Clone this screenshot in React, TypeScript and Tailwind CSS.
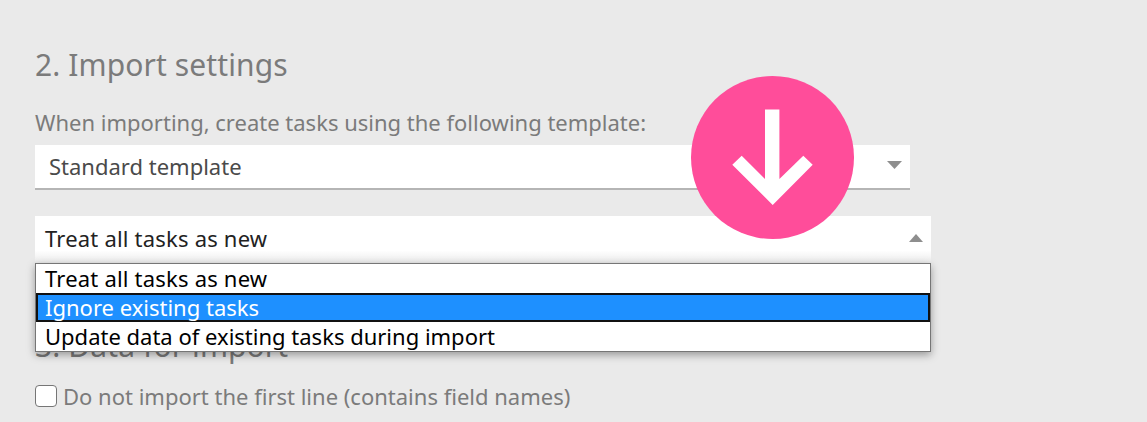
export default function App() {
  return (
    <div className="relative h-[422px] w-[1147px] overflow-hidden bg-[#eaeaea] pl-[35px] pt-[47px] font-['Noto_Sans',sans-serif]">
      <h2 className="h-[36px] text-[30px] leading-[36px] tracking-[0.1px] text-[#7b7b7b]">2. Import settings</h2>
      <p className="mt-[23px] h-[32px] text-[22px] leading-[32px] text-[#7b7b7b]">When importing, create tasks using the following template:</p>
      <div className="mt-[7px] flex h-[45px] w-[875px] items-center justify-between border-b-2 border-[#b5b5b5] bg-white pl-[14px] pr-[8px]">
        <span className="text-[22px] text-[#4a4a4a]">Standard template</span>
        <svg width="15" height="8" viewBox="0 0 15 8" className="mb-[4px]"><path d="M0 0h15L7.500 8z" fill="#8e8e8e" /></svg>
      </div>
      <div className="mt-[26px] flex h-[46px] w-[896px] items-center justify-between bg-gradient-to-b from-white from-[75%] to-[#ececec] pl-[10px] pr-[8px]">
        <span className="mb-[2px] text-[22px] tracking-[0.2px] text-[#222222]">Treat all tasks as new</span>
        <svg width="14" height="8" viewBox="0 0 14 8" className="mb-[2px]"><path d="M0 8h14L7 0z" fill="#8e8e8e" /></svg>
      </div>
      <h2 className="mt-[66px] h-[36px] text-[30px] leading-[36px] tracking-[0.1px] text-[#7b7b7b]">3. Data for import</h2>
      <label className="mt-[16px] flex items-center gap-[6px] text-[22px] leading-[32px] text-[#7b7b7b]">
        <span className="h-[22px] w-[22px] rounded-[4px] border border-[#767676] bg-white" />
        Do not import the first line (contains field names)
      </label>

      <div className="absolute left-[35px] top-[263px] flex h-[89px] w-[896px] flex-col border border-[#767676] bg-white text-[22px] leading-[29px] text-black shadow-[0_3px_8px_rgba(0,0,0,0.35)]">
        <div className="h-[29px] pl-[9px] tracking-[0.2px]">Treat all tasks as new</div>
        <div className="h-[29px] border-2 border-[#111111] bg-[#1e90ff] pl-[7px] leading-[25px] text-white">Ignore existing tasks</div>
        <div className="h-[29px] pl-[9px]">Update data of existing tasks during import</div>
      </div>

      <div className="absolute left-[691px] top-[76px] flex h-[163px] w-[163px] items-center justify-center rounded-full bg-[#ff4d9a]">
        <svg width="163" height="163" viewBox="0 0 163 163">
          <path d="M74 33.500h14.400v69.500L112.300 79.700 121.700 88.700 81.700 129 41.300 88.700 50.700 79.700 74 103z" fill="#ffffff" />
        </svg>
      </div>
    </div>
  );
}
